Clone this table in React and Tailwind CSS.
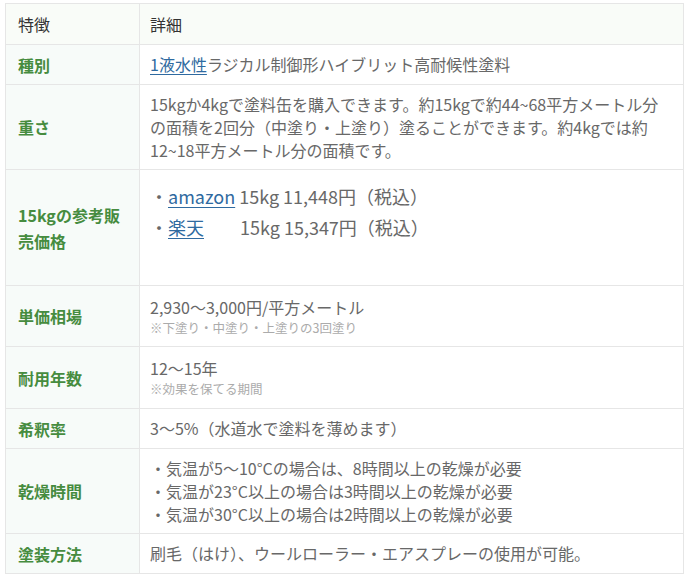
import React from 'react'

const font = { fontFamily: '"Noto Sans CJK JP", "Noto Sans", sans-serif' }

function Label({ children }) {
  return (
    <div className="w-[134px] shrink-0 flex items-center pl-[12px] pr-[8px] border-r border-[#e6e6e6] bg-[#f7fbf9] text-[16px] leading-[26px] font-bold text-[#468c3f]">
      {children}
    </div>
  )
}

function Row({ label, h, last, top, children }) {
  return (
    <div className={`flex ${h} ${last ? '' : 'border-b border-[#e6e6e6]'}`}>
      <Label>{label}</Label>
      <div className={`flex-1 flex ${top ? 'items-start' : 'items-center'} pl-[10px] pr-3 text-[16px] leading-[23px] text-[#686868]`}>
        <div>{children}</div>
      </div>
    </div>
  )
}

function Link({ children }) {
  return <span className="text-[#2f6aa0] underline underline-offset-[3px] decoration-[#2f6aa0]">{children}</span>
}

function Note({ children }) {
  return <div className="text-[12.5px] leading-[18px] text-[#ababab]">{children}</div>
}

export default function App() {
  return (
    <div className="w-[690px] h-[576px] bg-white pt-[3px] pl-[5px]" style={font}>
      <div className="w-[679px] border border-[#e6e6e6]">
        {/* Header */}
        <div className="flex h-[41px] border-b border-[#e6e6e6] bg-[#f9fcf8] text-[16px] text-[#333]">
          <div className="w-[134px] shrink-0 flex items-center pl-[12px] border-r border-[#e6e6e6]">特徴</div>
          <div className="flex-1 flex items-center pl-[10px]">詳細</div>
        </div>

        <Row label="種別" h="h-[40px]">
          <Link>1液水性</Link>ラジカル制御形ハイブリット高耐候性塗料
        </Row>

        <Row label="重さ" h="h-[85px]">
          15kgか4kgで塗料缶を購入できます。約15kgで約44~68平方メートル分
          <br />
          の面積を2回分（中塗り・上塗り）塗ることができます。約4kgでは約
          <br />
          12~18平方メートル分の面積です。
        </Row>

        <Row label={<span>15kgの参考販<br />売価格</span>} h="h-[116px]" top>
          <div className="pt-[13px] text-[18px] leading-[26px]">
            <div className="mb-[5px]">・<Link>amazon</Link> 15kg 11,448円（税込）</div>
            <div>
              ・<Link>楽天</Link>
              <span className="inline-block w-[36px]" />
              15kg 15,347円（税込）
            </div>
          </div>
        </Row>

        <Row label="単価相場" h="h-[61px]">
          <div>2,930〜3,000円/平方メートル</div>
          <Note>※下塗り・中塗り・上塗りの3回塗り</Note>
        </Row>

        <Row label="耐用年数" h="h-[62px]">
          <div>12〜15年</div>
          <Note>※効果を保てる期間</Note>
        </Row>

        <Row label="希釈率" h="h-[40px]">
          3〜5%（水道水で塗料を薄めます）
        </Row>

        <Row label="乾燥時間" h="h-[85px]">
          <div>・気温が5〜10°Cの場合は、8時間以上の乾燥が必要</div>
          <div>・気温が23°C以上の場合は3時間以上の乾燥が必要</div>
          <div>・気温が30°C以上の場合は2時間以上の乾燥が必要</div>
        </Row>

        <Row label="塗装方法" h="h-[39px]" last>
          刷毛（はけ）、ウールローラー・エアスプレーの使用が可能。
        </Row>
      </div>
    </div>
  )
}
